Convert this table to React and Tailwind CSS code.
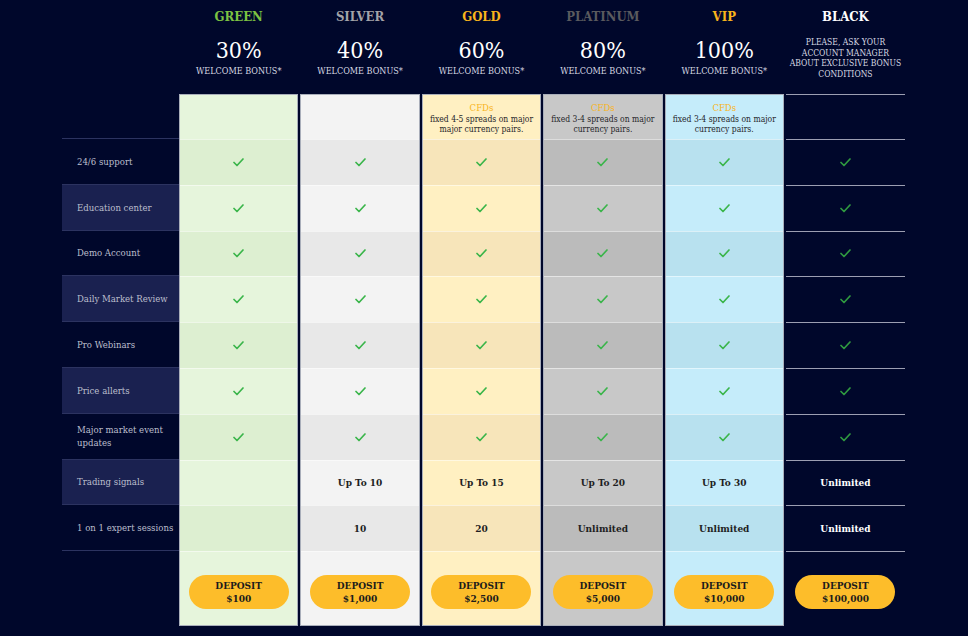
import React from "react";

const ROWS = [
  "24/6 support",
  "Education center",
  "Demo Account",
  "Daily Market Review",
  "Pro Webinars",
  "Price allerts",
  "Major market event updates",
  "Trading signals",
  "1 on 1 expert sessions",
];

const TIERS = [
  {
    name: "GREEN",
    nameColor: "text-[#7cc242]",
    bonus: "30%",
    light: "bg-[#e6f5dc]",
    dark: "bg-[#ddefd1]",
    cfd: null,
    signals: "",
    sessions: "",
    deposit: "$100",
  },
  {
    name: "SILVER",
    nameColor: "text-[#a3a3a8]",
    bonus: "40%",
    light: "bg-[#f3f3f3]",
    dark: "bg-[#e8e8e8]",
    cfd: null,
    signals: "Up To 10",
    sessions: "10",
    deposit: "$1,000",
  },
  {
    name: "GOLD",
    nameColor: "text-[#f8b41c]",
    bonus: "60%",
    light: "bg-[#fff0c2]",
    dark: "bg-[#f7e5ba]",
    cfd: ["fixed 4-5 spreads on major", "major currency pairs."],
    signals: "Up To 15",
    sessions: "20",
    deposit: "$2,500",
  },
  {
    name: "PLATINUM",
    nameColor: "text-[#5a5a5e]",
    bonus: "80%",
    light: "bg-[#c8c8c8]",
    dark: "bg-[#bbbbbb]",
    cfd: ["fixed 3-4 spreads on major", "currency pairs."],
    signals: "Up To 20",
    sessions: "Unlimited",
    deposit: "$5,000",
  },
  {
    name: "VIP",
    nameColor: "text-[#f8b41c]",
    bonus: "100%",
    light: "bg-[#c5ecfa]",
    dark: "bg-[#b8e1ef]",
    cfd: ["fixed 3-4 spreads on major", "currency pairs."],
    signals: "Up To 30",
    sessions: "Unlimited",
    deposit: "$10,000",
  },
];

const Check = ({ className = "text-[#3ab54a]" }) => (
  <svg width="11" height="9" viewBox="0 0 11 9" className={className}>
    <polyline
      points="1,4.5 4,7.5 10,1"
      fill="none"
      stroke="currentColor"
      strokeWidth="1.7"
      strokeLinecap="round"
      strokeLinejoin="round"
    />
  </svg>
);

const DepositButton = ({ amount }) => (
  <button className="w-[100px] h-[34px] rounded-full bg-[#fdbd2a] text-[#1c1c1c] font-bold text-[10px] leading-[13px] flex flex-col items-center justify-center">
    <span>DEPOSIT</span>
    <span>{amount}</span>
  </button>
);

const TierHeader = ({ name, nameColor, bonus }) => (
  <div className="h-[94px] flex flex-col items-center">
    <div className={`mt-[9px] text-[13px] leading-[15px] font-bold ${nameColor}`}>{name}</div>
    <div className="mt-[13px] text-[23px] leading-[26px] text-white">{bonus}</div>
    <div className="mt-[3px] text-[9px] leading-[11px] text-[#d8dae4]">WELCOME BONUS*</div>
  </div>
);

const TierColumn = ({ tier }) => {
  const cell = (i) => (i % 2 === 0 ? tier.dark : tier.light);
  return (
    <div className="w-[119.4px] flex flex-col">
      <TierHeader {...tier} />
      <div className="flex-1 flex flex-col border border-[#a9aeba]">
        <div className={`h-[44px] ${tier.light} flex flex-col items-center pt-[8px] text-[8.5px] leading-[10.5px]`}>
          {tier.cfd && (
            <>
              <span className="text-[#f8b41c] text-[9.5px]">CFDs</span>
              <span className="text-[#26262a]">{tier.cfd[0]}</span>
              <span className="text-[#26262a]">{tier.cfd[1]}</span>
            </>
          )}
        </div>
        {ROWS.map((row, i) => (
          <div
            key={row}
            className={`h-[45.8px] ${cell(i)} border-t border-white/50 flex items-center justify-center text-[10px] font-bold text-[#1e1e22]`}
          >
            {i < 7 && <Check />}
            {i === 7 && tier.signals}
            {i === 8 && tier.sessions}
          </div>
        ))}
        <div className={`flex-1 ${tier.light} border-t border-white/50 flex justify-center pt-[23px]`}>
          <DepositButton amount={tier.deposit} />
        </div>
      </div>
    </div>
  );
};

const BlackColumn = () => (
  <div className="w-[119px] flex flex-col">
    <div className="h-[94px] flex flex-col items-center">
      <div className="mt-[9px] text-[13px] leading-[15px] font-bold text-white">BLACK</div>
      <div className="mt-[13px] text-[8.5px] leading-[10.6px] text-[#d8dae4] text-center">
        PLEASE, ASK YOUR
        <br />
        ACCOUNT MANAGER
        <br />
        ABOUT EXCLUSIVE BONUS
        <br />
        CONDITIONS
      </div>
    </div>
    <div className="h-[45px] border-t border-[#9c9eb2]" />
    {ROWS.map((row, i) => (
      <div
        key={row}
        className="h-[45.8px] border-t border-[#9c9eb2] flex items-center justify-center text-[10px] font-bold text-white"
      >
        {i < 7 && <Check className="text-[#2f9a40]" />}
        {i >= 7 && "Unlimited"}
      </div>
    ))}
    <div className="flex-1 border-t border-[#9c9eb2] flex justify-center pt-[23px]">
      <DepositButton amount="$100,000" />
    </div>
  </div>
);

export default function App() {
  return (
    <div
      className="w-[968px] h-[636px] overflow-hidden bg-[#00072b] flex pl-[62px] pb-[10px]"
      style={{ fontFamily: '"DejaVu Serif Condensed", "DejaVu Serif", serif' }}
    >
      <div className="w-[117px] flex flex-col">
        <div className="h-[139px] border-b border-[#2c3360]" />
        {ROWS.map((row, i) => (
          <div
            key={row}
            className={`h-[45.8px] border-b border-[#2c3360] flex items-center pl-[15px] pr-[1px] text-[9.5px] leading-[13px] text-[#bcbfcd] ${
              i % 2 === 1 ? "bg-[#1a2150]" : ""
            }`}
          >
            {row}
          </div>
        ))}
      </div>
      <div className="flex gap-[2px]">
        {TIERS.map((tier) => (
          <TierColumn key={tier.name} tier={tier} />
        ))}
        <BlackColumn />
      </div>
    </div>
  );
}
